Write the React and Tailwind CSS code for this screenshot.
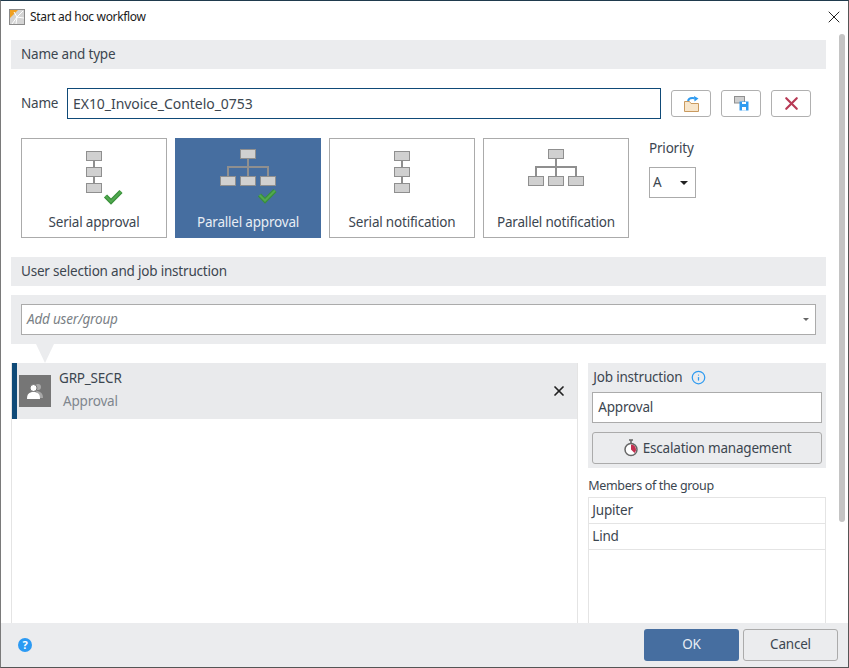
import { X, Info } from 'lucide-react'

const CARDS = [
  { label: 'Serial approval', kind: 'serial', check: true },
  { label: 'Parallel approval', kind: 'parallel', check: true, active: true },
  { label: 'Serial notification', kind: 'serial' },
  { label: 'Parallel notification', kind: 'parallel' },
]

function Box({ x, y }) {
  return <rect x={x + 0.5} y={y + 0.5} width="15" height="9" fill="#d0d0d0" stroke="#8f8f8f" />
}

function Check({ x, y }) {
  const d = `M${x + 1.500} ${y + 7}l5.500 5.500 10-10`
  return (
    <g fill="none">
      <path d={d} stroke="#38903a" strokeWidth="4.500" />
      <path d={d} stroke="#52a850" strokeWidth="2" />
    </g>
  )
}

/* ── Workflow glyphs ── */
function SerialIcon({ check }) {
  return (
    <svg width="60" height="56" viewBox="0 0 60 56" className="block">
      <path d="M30 10v26" stroke="#8f8f8f" strokeWidth="2" />
      <Box x={22} y={2} />
      <Box x={22} y={18} />
      <Box x={22} y={34} />
      {check && <Check x={40} y={40} />}
    </svg>
  )
}

function ParallelIcon({ check }) {
  return (
    <svg width="60" height="56" viewBox="0 0 60 56" className="block">
      <path d="M30 9v18M10 27v-9h40v9" fill="none" stroke="#8f8f8f" strokeWidth="2" />
      <Box x={22} y={0} />
      <Box x={2} y={27} />
      <Box x={22} y={27} />
      <Box x={42} y={27} />
      {check && <Check x={40} y={39} />}
    </svg>
  )
}

function FolderIcon() {
  return (
    <svg width="15" height="16" viewBox="0 0 15 16">
      <path d="M0.500 5.500h5l1.500 2h7.500v8H0.500z" fill="#f8e6cb" stroke="#c99a5f" />
      <path d="M4 5c0.500-2.500 3-3.500 6.500-2.800" fill="none" stroke="#2f9bf0" strokeWidth="2" />
      <path d="M10 0l4.500 2.500-4 3z" fill="#2f9bf0" />
    </svg>
  )
}

function SaveIcon() {
  return (
    <svg width="15" height="15" viewBox="0 0 15 15">
      <rect x="0.500" y="0.500" width="10" height="6.500" fill="#cfcfcf" stroke="#8f8f8f" />
      <path d="M5.500 5.500h9v9h-9z" fill="#2f9bf0" />
      <rect x="8" y="6" width="4" height="2" fill="#fff" />
      <rect x="8" y="11" width="4" height="3.500" fill="#fff" />
    </svg>
  )
}

function TimerIcon() {
  return (
    <svg width="16" height="18" viewBox="0 0 16 18">
      <path d="M6 1h4M8 1v3" stroke="#666" strokeWidth="1.500" />
      <circle cx="8" cy="10.500" r="6" fill="#fff" stroke="#666" strokeWidth="1.500" />
      <path d="M8 5.500a5 5 0 0 1 3.500 8.500L8 10.500z" fill="#c22f4f" />
    </svg>
  )
}

function UserIcon() {
  return (
    <svg width="18" height="18" viewBox="0 0 18 18">
      <circle cx="12" cy="5" r="3" fill="#a8a8a8" />
      <path d="M10 9c4 0 7 2 7 7h-4z" fill="#a8a8a8" />
      <circle cx="7.500" cy="6" r="3.500" fill="#fff" stroke="#767676" />
      <path d="M1 17c0-5 2-7 6.500-7s6.500 2 6.500 7z" fill="#fff" />
    </svg>
  )
}

function AppIcon() {
  return (
    <svg width="16" height="16" viewBox="0 0 16 16">
      <rect x="0.500" y="0.500" width="15" height="15" fill="#d4d4d4" stroke="#8a8a8a" />
      <path d="M1 1h8L1 9z" fill="#f0a020" />
      <path d="M3 15l5-7 6-6M8 8l7 1M8 8l-1 7M8 8L5 3" stroke="#fff" strokeWidth="1" fill="none" />
    </svg>
  )
}

function TypeCard({ card }) {
  return (
    <div
      className={`w-[146px] h-[100px] flex flex-col items-center border ${
        card.active ? 'bg-[#466ea0] border-[#466ea0] text-[#e8edf4]' : 'bg-white border-[#ababab] text-[#3c4650]'
      }`}
    >
      <div className="h-[65px] pt-[10px]">
        {card.kind === 'serial' ? <SerialIcon check={card.check} /> : <ParallelIcon check={card.check} />}
      </div>
      <span className="mt-[9px] leading-[18px]">{card.label}</span>
    </div>
  )
}

function SectionBar({ children }) {
  return (
    <div className="h-[29px] bg-[#ebecee] pl-[10px] flex items-center text-[#3c4650]">{children}</div>
  )
}

function SmallButton({ children }) {
  return (
    <button className="w-[40px] h-[27px] border border-[#b0b0b0] rounded-[3px] bg-white flex items-center justify-center">
      {children}
    </button>
  )
}

export default function App() {
  return (
    <div className="w-[849px] h-[668px] flex flex-col bg-white border-t border-t-[#1f3a4d] border-l border-l-[#7a7a7a] border-r border-r-[#555] border-b border-b-[#555] overflow-hidden text-[13.500px] font-['Noto_Sans',sans-serif] tracking-[-0.2px]">
      {/* Title bar */}
      <div className="h-[31px] shrink-0 flex items-center pl-[8px] pr-[4px] text-[12px] tracking-[-0.33px] text-[#1a1a1a]">
        <AppIcon />
        <span className="ml-[5px]">Start ad hoc workflow</span>
        <X className="ml-auto w-[20px] h-[20px] text-[#222]" strokeWidth={1.200} />
      </div>

      <div className="flex-1 min-h-0 flex">
        <div className="w-[825px] pl-[10px] pt-[8px] flex flex-col min-h-0">
          <SectionBar>Name and type</SectionBar>

          <div className="mt-[19px] flex items-center pl-[10px] text-[#3c4650]">
            <span className="w-[46px]">Name</span>
            <div className="w-[594px] h-[31px] border border-[#0f4a78] flex items-center pl-[5px] text-[14px] tracking-[-0.05px]">
              EX10_Invoice_Contelo_0753
            </div>
            <div className="ml-[10px] flex gap-[10px]">
              <SmallButton><FolderIcon /></SmallButton>
              <SmallButton><SaveIcon /></SmallButton>
              <SmallButton><X className="w-[21px] h-[21px] text-[#b83a55]" strokeWidth={2.500} /></SmallButton>
            </div>
          </div>

          <div className="mt-[19px] pl-[10px] flex">
            <div className="flex gap-[8px]">
              {CARDS.map(c => <TypeCard key={c.label} card={c} />)}
            </div>
            <div className="ml-[20px] text-[#3c4650]">
              <div className="leading-[20px]">Priority</div>
              <div className="mt-[9px] w-[47px] h-[31px] border border-[#ababab] flex items-center justify-between pl-[3px] pr-[7px]">
                A
                <span className="w-0 h-0 border-x-[4px] border-x-transparent border-t-[4px] border-t-[#222]" />
              </div>
            </div>
          </div>

          <div className="mt-[19px]">
            <SectionBar>User selection and job instruction</SectionBar>
          </div>

          <div className="mt-[9px] h-[49px] bg-[#ebecee] px-[10px] flex items-center">
            <div className="w-full h-[31px] bg-white border border-[#ababab] flex items-center justify-between pl-[5px] pr-[6px] italic text-[#7a7f85]">
              Add user/group
              <span className="w-0 h-0 border-x-[3px] border-x-transparent border-t-[3px] border-t-[#666]" />
            </div>
          </div>

          <div className="relative flex-1 min-h-0 flex pt-[19px]">
            <span className="absolute left-[25px] top-0 w-0 h-0 border-x-[9px] border-x-transparent border-t-[19px] border-t-[#ebecee]" />
            <div className="w-[568px] border-x border-x-[#e4e4e4]">
              <div className="h-[56px] bg-[#e9eaec] border-l-[5px] border-l-[#0f4a78] flex items-center pl-[2px] pr-[10px]">
                <div className="w-[32px] h-[32px] bg-[#767676] flex items-center justify-center">
                  <UserIcon />
                </div>
                <div className="ml-[8px] self-start text-[#3c4650]">
                  <div className="mt-[5px] leading-[20px]">GRP_SECR</div>
                  <div className="mt-[3px] ml-[4px] leading-[20px] text-[#7f868e]">Approval</div>
                </div>
                <X className="ml-auto w-[16px] h-[16px] text-[#222]" strokeWidth={2.600} />
              </div>
            </div>

            <div className="ml-[10px] w-[238px] flex flex-col text-[#3c4650]">
              <div className="h-[105px] bg-[#ebecee] px-[4px]">
                <div className="h-[29px] flex items-center pl-[1px]">
                  Job instruction
                  <Info className="ml-[9px] w-[15px] h-[15px] text-[#2f9bf0]" strokeWidth={2} />
                </div>
                <div className="h-[31px] bg-white border border-[#ababab] flex items-center pl-[5px]">Approval</div>
                <button className="mt-[9px] w-full h-[32px] border border-[#ababab] rounded-[3px] flex items-center justify-center gap-[4px]">
                  <TimerIcon />
                  Escalation management
                </button>
              </div>
              <div className="mt-[8px] h-[20px] leading-[20px] text-[12.500px] tracking-[-0.35px]">Members of the group</div>
              <div className="mt-[1px] flex-1 border-x border-t border-[#e4e4e4]">
                <div className="h-[26px] border-b border-[#e4e4e4] flex items-center pl-[3px]">Jupiter</div>
                <div className="h-[26px] border-b border-[#e4e4e4] flex items-center pl-[3px]">Lind</div>
              </div>
            </div>
          </div>
        </div>

        <div className="flex-1 pl-[13px] pt-[2px]">
          <div className="w-[6px] h-[488px] rounded-full bg-[#c4c4c4]" />
        </div>
      </div>

      {/* Footer */}
      <div className="h-[44px] shrink-0 bg-[#ebecee] flex items-center pl-[17px] pr-[10px] pb-[1px]">
        <span className="w-[14px] h-[14px] rounded-full bg-[#2b9af3] text-white text-[11px] leading-[14px] font-bold text-center">?</span>
        <button className="ml-auto w-[95px] h-[32px] rounded-[3px] bg-[#466ea0] text-[#e8edf4]">OK</button>
        <button className="ml-[4px] w-[95px] h-[32px] rounded-[3px] border border-[#ababab] text-[#3c4650]">Cancel</button>
      </div>
    </div>
  )
}
